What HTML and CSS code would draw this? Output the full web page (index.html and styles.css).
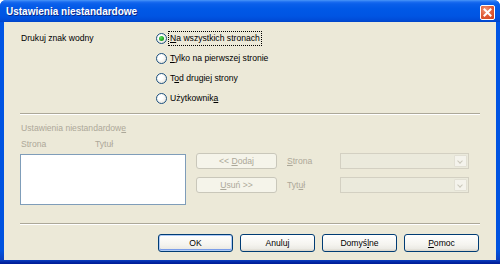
FILE: index.html
```html
<!DOCTYPE html>
<html lang="pl">
<head>
    <meta charset="UTF-8">
    <title>Ustawienia niestandardowe</title>
    <link rel="stylesheet" href="styles.css">
</head>
<body>

<div class="window">

    <div class="titlebar">
        <span class="title">Ustawienia niestandardowe</span>
        <span class="close">
            <svg width="15" height="15" viewBox="0 0 15 15">
                <path d="M4.5 4.5 L10.5 10.5 M10.5 4.5 L4.5 10.5" stroke="#fff" stroke-width="2" stroke-linecap="square"/>
            </svg>
        </span>
    </div>

    <div class="client">

        <div class="watermark">
            <div class="label">Drukuj znak wodny</div>
            <div class="radios">
                <div class="radio"><span class="dot checked"></span><span class="text focus"><u>N</u>a wszystkich stronach</span></div>
                <div class="radio"><span class="dot"></span><span class="text"><u>T</u>ylko na pierwszej stronie</span></div>
                <div class="radio"><span class="dot"></span><span class="text">T<u>o</u>d drugiej strony</span></div>
                <div class="radio"><span class="dot"></span><span class="text">Użytkownik<u>a</u></span></div>
            </div>
        </div>

        <div class="etched"></div>

        <div class="custom">
            <div class="caption">Ustawienia niestandardow<u>e</u></div>
            <div class="headers">
                <span class="col-page">Strona</span>
                <span>Tytuł</span>
            </div>

            <div class="editor">
                <div class="listbox"></div>
                <div class="controls">
                    <div class="ctl-row">
                        <span class="btn disabled"><span>&lt;&lt; <u>D</u>odaj</span></span>
                        <span class="field-label"><u>S</u>trona</span>
                        <span class="combo"><span class="drop"></span></span>
                    </div>
                    <div class="ctl-row">
                        <span class="btn disabled"><span><u>U</u>suń &gt;&gt;</span></span>
                        <span class="field-label">Tyt<u>u</u>ł</span>
                        <span class="combo"><span class="drop"></span></span>
                    </div>
                </div>
            </div>
        </div>

        <div class="etched bottom"></div>

        <div class="actions">
            <span class="btn default"><span>OK</span></span>
            <span class="btn"><span>Anuluj</span></span>
            <span class="btn"><span>Domyś<u>l</u>ne</span></span>
            <span class="btn"><span><u>P</u>omoc</span></span>
        </div>

    </div>
</div>

</body>
</html>
```

FILE: styles.css
```css
* {
    margin: 0;
    padding: 0;
    box-sizing: border-box;
}

body {
    background: #ffffff;
    font-family: "Liberation Sans", Arial, sans-serif;
    font-size: 8.6px;
    color: #000000;
}

u {
    text-decoration: underline;
    text-underline-offset: 1px;
}

.window {
    width: 500px;
    height: 264px;
    display: flex;
    flex-direction: column;
    border-radius: 6px 6px 0 0;
    overflow: hidden;
    background: linear-gradient(to bottom, #0055e5 0, #0052df 250px, #0a3fc0 260px, #001e9a 263px);
    padding: 0 4px 4px 4px;
}

.titlebar {
    height: 22px;
    margin: 0 -4px;
    padding: 0 5px 0 6px;
    display: flex;
    align-items: center;
    justify-content: space-between;
    background: linear-gradient(to bottom, #4a96f8 0, #1a6cf0 2px, #0a5fea 4px, #0058e6 9px, #0055e3 16px, #004cd8 20px, #0044c8 22px);
}

.title {
    color: #ffffff;
    font-weight: bold;
    font-size: 10px;
    text-shadow: 1px 1px 0 #0a2a8a;
    margin-top: 1px;
}

.close {
    width: 15px;
    height: 15px;
    margin-top: 3px;
    border: 1px solid #ffffff;
    border-radius: 2px;
    background: radial-gradient(circle at 35% 30%, #f19a7c 0, #e2603c 45%, #cf3f18 100%);
    display: flex;
}

.close svg {
    margin: -1px;
}

.client {
    flex: 1;
    background: #ece9d8;
    padding: 6px 16px 0 16px;
}

/* top group */

.watermark {
    display: flex;
}

.watermark .label {
    width: 136px;
    height: 20px;
    padding-left: 1px;
    display: flex;
    align-items: center;
}

.radio {
    height: 20px;
    display: flex;
    align-items: center;
}

.dot {
    width: 11px;
    height: 11px;
    border: 1px solid #1c5180;
    border-radius: 50%;
    background: radial-gradient(circle at 40% 35%, #ffffff 30%, #e6e4dc 80%, #d4d1c6 100%);
    margin-right: 2px;
    display: flex;
    align-items: center;
    justify-content: center;
}

.dot.checked::after {
    content: "";
    width: 5px;
    height: 5px;
    border-radius: 50%;
    background: radial-gradient(circle at 35% 35%, #5ee05e 0, #22a622 60%, #178017 100%);
}

.text {
    padding: 1px 1px;
    line-height: 11px;
}

.focus {
    outline: 1px dotted #000000;
}

.etched {
    height: 2px;
    margin-top: 5px;
    border-top: 1px solid #aca899;
    border-bottom: 1px solid #ffffff;
}

.etched.bottom {
    margin-top: 18px;
}

/* custom settings */

.custom {
    color: #aca899;
}

.caption {
    margin-top: 6px;
    height: 14px;
    line-height: 14px;
    padding-left: 1px;
}

.headers {
    margin-top: 2px;
    height: 14px;
    line-height: 14px;
    padding-left: 1px;
    display: flex;
}

.col-page {
    width: 74px;
}

.editor {
    margin-top: 2px;
    display: flex;
}

.listbox {
    margin-top: 1px;
    width: 166px;
    height: 51px;
    background: #ffffff;
    border: 1px solid #7f9db9;
}

.controls {
    margin-left: 10px;
    display: flex;
    flex-direction: column;
    gap: 8px;
}

.ctl-row {
    display: flex;
    align-items: center;
    height: 16px;
}

.field-label {
    width: 53px;
    margin-left: 10px;
}

.combo {
    width: 129px;
    height: 16px;
    border: 1px solid #d3d0c2;
    background: #ebeadc;
    display: flex;
    justify-content: flex-end;
    padding: 1px;
}

.drop {
    width: 13px;
    border: 1px solid #e2e0d4;
    border-radius: 1px;
    background: #f4f3ec;
    position: relative;
}

.drop::after {
    content: "";
    position: absolute;
    left: 3px;
    top: 3px;
    width: 3px;
    height: 3px;
    border-right: 1px solid #c9c7ba;
    border-bottom: 1px solid #c9c7ba;
    transform: rotate(45deg);
}

/* buttons */

.btn {
    width: 75px;
    height: 18px;
    display: flex;
    align-items: center;
    justify-content: center;
    border: 1px solid #003c74;
    border-radius: 3px;
    background: linear-gradient(to bottom, #ffffff 0, #f5f4ef 60%, #ecebe5 85%, #d8d3c8 100%);
    color: #000000;
}

.btn.default {
    box-shadow: inset 0 0 0 1px #aecaf6, inset 0 -1px 0 1px #7b9de8;
}

.btn.disabled {
    width: 81px;
    height: 16px;
    border-color: #c9c7ba;
    background: #f5f4ea;
    color: #aca899;
}

.actions {
    margin-top: 9px;
    padding-right: 1px;
    display: flex;
    justify-content: flex-end;
    gap: 7px;
}
```
